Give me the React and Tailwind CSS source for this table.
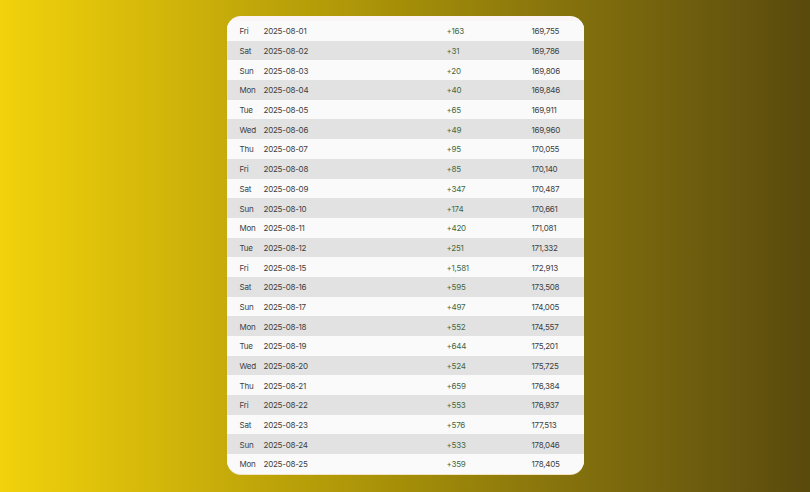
import React from 'react';

const rows = [
  ['Fri', '2025-08-01', '+163', '169,755'],
  ['Sat', '2025-08-02', '+31', '169,786'],
  ['Sun', '2025-08-03', '+20', '169,806'],
  ['Mon', '2025-08-04', '+40', '169,846'],
  ['Tue', '2025-08-05', '+65', '169,911'],
  ['Wed', '2025-08-06', '+49', '169,960'],
  ['Thu', '2025-08-07', '+95', '170,055'],
  ['Fri', '2025-08-08', '+85', '170,140'],
  ['Sat', '2025-08-09', '+347', '170,487'],
  ['Sun', '2025-08-10', '+174', '170,661'],
  ['Mon', '2025-08-11', '+420', '171,081'],
  ['Tue', '2025-08-12', '+251', '171,332'],
  ['Fri', '2025-08-15', '+1,581', '172,913'],
  ['Sat', '2025-08-16', '+595', '173,508'],
  ['Sun', '2025-08-17', '+497', '174,005'],
  ['Mon', '2025-08-18', '+552', '174,557'],
  ['Tue', '2025-08-19', '+644', '175,201'],
  ['Wed', '2025-08-20', '+524', '175,725'],
  ['Thu', '2025-08-21', '+659', '176,384'],
  ['Fri', '2025-08-22', '+553', '176,937'],
  ['Sat', '2025-08-23', '+576', '177,513'],
  ['Sun', '2025-08-24', '+533', '178,046'],
  ['Mon', '2025-08-25', '+359', '178,405'],
];

const App = () => {
  return (
    <div className="w-[810px] h-[492px] overflow-hidden bg-gradient-to-r from-[#f2d20b] via-[#a48e08] to-[#594a0d] flex justify-center pt-[16px] font-['Inter',sans-serif]">
      <div className="w-[357px] h-[458px] rounded-[14px] overflow-hidden bg-[#fbf5f5] pt-[5px] shadow-[0_1px_0_#f3e3c0]">
        {rows.map((r, i) => (
          <div
            key={r[1]}
            className={
              'grid grid-cols-[24px_183px_85px_1fr] items-center h-[19.7px] pl-[13px] pt-[1px] text-[8px] tracking-[-0.03em] text-[#404040] ' +
              (i % 2 === 0 ? 'bg-[#fafafa]' : 'bg-[#e2e2e2]')
            }
          >
            <span>{r[0]}</span>
            <span>{r[1]}</span>
            <span className="text-[#42683f]">{r[2]}</span>
            <span>{r[3]}</span>
          </div>
        ))}
      </div>
    </div>
  );
};

export default App;
